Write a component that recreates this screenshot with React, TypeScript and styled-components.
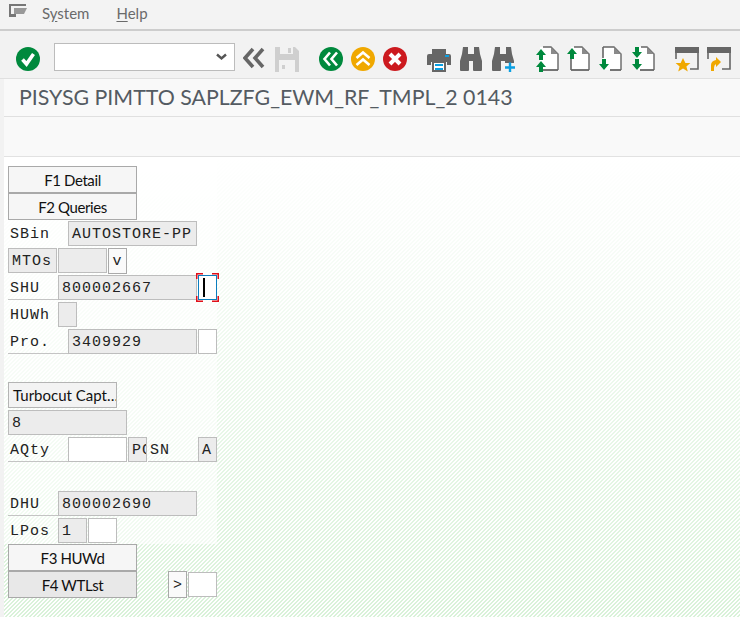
import React from "react";
import styled, { createGlobalStyle } from "styled-components";

const Global = createGlobalStyle`
  html, body { margin: 0; padding: 0; height: 100%; background: #f2f2f2; overflow: hidden; }
  #root { height: 100%; }
`;

const Screen = styled.div`
  width: 740px;
  height: 617px;
  display: flex;
  flex-direction: column;
  background: #f2f2f2;
  font-family: Lato, "Open Sans", sans-serif;
`;

const MenuBar = styled.div`
  height: 25px;
  flex: none;
  display: flex;
  align-items: center;
  background: #f3f3f3;
  border-bottom: 2px solid #cdcdcd;
  padding: 0 0 4px 9px;
  font-size: 15px;
  color: #6a6a6a;
`;

const MenuIcon = styled.svg`
  width: 18px;
  height: 14px;
  margin: -3px 15px 0 0;
`;

const MenuItem = styled.span`
  margin-right: 27px;
  u { text-underline-offset: 2px; }
`;

const ToolBar = styled.div`
  height: 48px;
  flex: none;
  display: flex;
  align-items: center;
  padding: 9px 0 0 16px;
  box-sizing: border-box;
  background: #f2f2f2;
  border-bottom: 1px solid #e0e0e0;
`;

const Group = styled.div<{ $gap?: number }>`
  display: flex;
  align-items: center;
  gap: 8px;
  margin-right: ${(p) => p.$gap ?? 20}px;
`;

const Icon = styled.svg`
  width: 24px;
  height: 26px;
  flex: none;
  display: block;
`;

const Combo = styled.div`
  width: 181px;
  height: 28px;
  margin-top: -4px;
  box-sizing: border-box;
  background: #fff;
  border: 1px solid #bcbcbc;
  display: flex;
  align-items: center;
  justify-content: flex-end;
  padding-right: 7px;
`;

const Chevron = styled.svg`
  width: 11px;
  height: 8px;
`;

const TitleBar = styled.div`
  height: 35px;
  flex: none;
  margin-left: 4px;
  padding: 0 0 2px 15px;
  display: flex;
  align-items: center;
  background: #f9f9f9;
  border-bottom: 1px solid #e0e0e0;
  font-size: 21.35px;
  color: #545b62;
  white-space: nowrap;
`;

const AppBar = styled.div`
  height: 39px;
  flex: none;
  margin-left: 4px;
  background: #f9f9f9;
  border-bottom: 1px solid #e2e2e2;
`;

const Canvas = styled.div`
  flex: 1;
  margin-left: 4px;
  background-color: #fff;
  background-image:
    linear-gradient(to bottom, #fff 0%, rgba(255, 255, 255, 0) 100%),
    linear-gradient(135deg, #d9f2d9 25%, #fff 25%, #fff 50%, #d9f2d9 50%, #d9f2d9 75%, #fff 75%);
  background-size: 100% 100%, 4px 4px;
`;

const Panel = styled.div`
  width: 213px;
  box-sizing: border-box;
  padding: 9px 0 0 4px;
  background: rgba(255, 255, 255, 0.55);
`;

const Row = styled.div`
  display: flex;
  height: 27px;
  align-items: flex-start;
`;

const FreeRows = styled.div`
  padding-left: 4px;
  width: 213px;
  box-sizing: border-box;
`;

const Button = styled.div<{ $cols: number; $focus?: boolean }>`
  width: ${(p) => p.$cols * 10 - 1}px;
  height: 27px;
  margin-right: 1px;
  flex: none;
  box-sizing: border-box;
  border: 1px solid #a9a9a9;
  background: ${(p) => (p.$focus ? "#e8e8e8" : "#f6f6f6")};
  display: flex;
  align-items: center;
  justify-content: center;
  font-size: 15px;
  letter-spacing: -0.4px;
  color: #111;
  white-space: nowrap;
`;

const Spacer = styled.div<{ $cols: number }>`
  width: ${(p) => p.$cols * 10 - 10}px;
  flex: none;
`;

const SmallButton = styled.div<{ $cols: number }>`
  width: ${(p) => p.$cols * 10 - 1}px;
  height: 26px;
  margin: 0 1px 0 0;
  flex: none;
  box-sizing: border-box;
  border: 1px solid #b4b4b4;
  background: #f3f3f3;
  display: flex;
  align-items: center;
  padding-left: 4px;
  font-size: 15px;
  color: #111;
  white-space: nowrap;
  overflow: hidden;
`;

const mono = `
  font-family: "Liberation Mono", "DejaVu Sans Mono", monospace;
  font-size: 15px;
  letter-spacing: 1px;
  color: #222;
`;

const Label = styled.div<{ $cols: number; $line?: boolean }>`
  ${mono}
  width: ${(p) => p.$cols * 10}px;
  height: 25px;
  margin-top: 1px;
  flex: none;
  box-sizing: border-box;
  padding: 2px 0 0 2px;
  display: flex;
  align-items: center;
  border-bottom: 1px solid ${(p) => (p.$line ? "#c4c4c4" : "transparent")};
`;

const Field = styled.div<{ $cols: number; $white?: boolean }>`
  ${mono}
  width: ${(p) => p.$cols * 10 - 1}px;
  height: 25px;
  margin: 1px 1px 0 0;
  flex: none;
  box-sizing: border-box;
  padding: 1px 0 0 3px;
  display: flex;
  align-items: center;
  overflow: hidden;
  white-space: nowrap;
  background: ${(p) => (p.$white ? "#fff" : "#ececec")};
  border: 1px solid #bdbdbd;
`;

const OutlineButton = styled(Field)`
  background: #fafafa;
  border-color: #a9a9a9;
  height: 26px;
  justify-content: center;
  padding-left: 0;
`;

const GtButton = styled(OutlineButton)`
  height: 27px;
  margin-top: 0;
  font-size: 15px;
  letter-spacing: 0;
`;

const CursorField = styled.div`
  position: relative;
  width: 19px;
  height: 25px;
  margin: 1px 1px 0 0;
  flex: none;
  box-sizing: border-box;
  background: #fff;
  border: 1px solid #0a7dbf;
`;

const Caret = styled.span`
  position: absolute;
  left: 4px;
  top: 2px;
  width: 2px;
  height: 19px;
  background: #000;
`;

const Corners = styled.svg`
  position: absolute;
  left: -3px;
  top: -3px;
  width: 23px;
  height: 29px;
`;

const G = "#00893d";
const Gy = "#666";
const B = "#0a9fe2";
const O = "#f0a800";

const GreenUp = ({ x, y }: { x: number; y: number }) => (
  <path d={`M${x} ${y}l5 -6 5 6h-3v5h-4v-5z`} fill={G} />
);
const GreenDown = ({ x, y }: { x: number; y: number }) => (
  <path d={`M${x} ${y}l5 6 5 -6h-3v-5h-4v5z`} fill={G} />
);

const Binoculars = ({ plus }: { plus?: boolean }) => (
  <Icon viewBox="0 0 24 26">
    <path
      d="M4 1h5v7h6V1h5l1 7 2 7v9q0 1-1 1h-7q-1 0-1-1v-9h-4v9q0 1-1 1H2q-1 0-1-1v-9l2-7z"
      fill={Gy}
    />
    {plus && <path d="M13 17h11v9H13z" fill="#f2f2f2" />}
    {plus && <path d="M14 21.5h10M19 16.5v10" stroke={B} strokeWidth="2.4" fill="none" />}
  </Icon>
);

type DocProps = { x: number; top: number; left?: string; bottom: number };

const Doc = ({ x, top, left, bottom }: DocProps) => (
  <>
    <path d={`M${x} 1H${x + 11}L${x + 18} 8V24H${x}z`} fill="#fff" />
    <path d={`M${x + top} 1H${x + 11}L${x + 18} 8V24`} fill="none" stroke={Gy} strokeWidth="1.4" />
    <path d={`M${x + 11} 1L${x + 18} 8H${x + 11}z`} fill="#8a8a8a" />
    <path d={`M${x + 18} 24H${x + bottom}`} fill="none" stroke={Gy} strokeWidth="1.8" />
    {left && <path d={left} fill="none" stroke={Gy} strokeWidth="1.6" />}
  </>
);

export default function App() {
  return (
    <Screen>
      <Global />
      <MenuBar>
        <MenuIcon viewBox="0 0 18 14">
          <path d="M0 0h17v2H2v8h5v3H0z" fill="#777" />
          <path d="M5 4h13l-3 6H5z" fill="#999" />
        </MenuIcon>
        <MenuItem>S<u>y</u>stem</MenuItem>
        <MenuItem><u>H</u>elp</MenuItem>
      </MenuBar>

      <ToolBar>
        <Group $gap={14}>
          <Icon viewBox="0 0 24 26">
            <circle cx="12" cy="13" r="12" fill={G} />
            <path d="M6.5 13.5l4 4.5 7-10" fill="none" stroke="#fff" strokeWidth="3.6" />
          </Icon>
        </Group>
        <Group $gap={8}>
          <Combo>
            <Chevron viewBox="0 0 11 8">
              <path d="M1 1.5l4.5 4 4.5-4" fill="none" stroke="#555" strokeWidth="2.4" />
            </Chevron>
          </Combo>
        </Group>
        <Group>
          <Icon viewBox="0 0 24 26">
            <path d="M10 3l-8 9 8 9M20 3l-8 9 8 9" fill="none" stroke={Gy} strokeWidth="3.6" />
          </Icon>
          <Icon viewBox="0 0 24 26">
            <path d="M0 1h20l4 4v21H0z" fill="#cfcfcf" />
            <path d="M5 1h13v7H5z" fill="#f2f2f2" />
            <path d="M13 2h3v5h-3z" fill="#cfcfcf" />
            <path d="M4 14h16v12H4z" fill="#f2f2f2" />
            <path d="M7 19h3v4H7z" fill="#cfcfcf" />
          </Icon>
        </Group>
        <Group>
          <Icon viewBox="0 0 24 26">
            <circle cx="12" cy="13" r="12" fill={G} />
            <path d="M11 6.5l-5.5 6.5 5.5 6.5M18 6.5l-5.5 6.5 5.5 6.5" fill="none" stroke="#fff" strokeWidth="2.6" />
          </Icon>
          <Icon viewBox="0 0 24 26">
            <circle cx="12" cy="13" r="12" fill={O} />
            <path d="M5.5 12l6.5-5.5 6.5 5.5M5.5 19l6.5-5.5 6.5 5.5" fill="none" stroke="#fff" strokeWidth="2.6" />
          </Icon>
          <Icon viewBox="0 0 24 26">
            <circle cx="12" cy="13" r="12" fill="#cc1a1f" />
            <path d="M7 8l10 10M17 8L7 18" fill="none" stroke="#fff" strokeWidth="4" />
          </Icon>
        </Group>
        <Group>
          <Icon viewBox="0 0 24 26">
            <path d="M5 3h14v5H5z" fill={Gy} />
            <path d="M0 10q0-2 2-2h20q2 0 2 2v9h-4v-3H4v3H0z" fill={Gy} />
            <path d="M18 9h4v2h-4z" fill={B} />
            <path d="M5 15h14v11H5z" fill={Gy} />
            <path d="M7 17h10v7H7z" fill="#fff" />
            <path d="M8 18h8v2H8zM8 22h8v2H8z" fill={B} />
          </Icon>
          <Binoculars />
          <Binoculars plus />
        </Group>
        <Group>
          <Icon viewBox="0 0 24 26">
            <Doc x={5} top={3} bottom={1} />
            <GreenUp x={1} y={9} />
            <GreenUp x={1} y={21} />
          </Icon>
          <Icon viewBox="0 0 24 26">
            <Doc x={4} top={3} bottom={0} left="M4 12V24" />
            <GreenUp x={0} y={8} />
          </Icon>
          <Icon viewBox="0 0 24 26">
            <Doc x={4} top={0} bottom={7} left="M4 1V12" />
            <GreenDown x={0} y={18} />
          </Icon>
          <Icon viewBox="0 0 24 26">
            <Doc x={5} top={5} bottom={4} />
            <GreenDown x={1} y={6} />
            <GreenDown x={1} y={18} />
          </Icon>
        </Group>
        <Group>
          <Icon viewBox="0 0 24 26">
            <path d="M0 1h24v6H0z" fill={Gy} />
            <path d="M23 7v16H15M1 7v6" fill="none" stroke={Gy} strokeWidth="1.6" />
            <path d="M8 12l2.4 5h5l-4 3.4 1.4 5-4.8-3-4.8 3 1.4-5-4-3.4h5z" fill={O} />
          </Icon>
          <Icon viewBox="0 0 24 26">
            <path d="M0 1h24v6H0z" fill={Gy} />
            <path d="M23 7v16H15M1 7v6" fill="none" stroke={Gy} strokeWidth="1.6" />
            <path d="M4 25v-6q0-4 5-5v-3l5 5-5 5v-3q-2 1-2 4v3z" fill={O} />
          </Icon>
        </Group>
      </ToolBar>

      <TitleBar>PISYSG PIMTTO SAPLZFG_EWM_RF_TMPL_2 0143</TitleBar>
      <AppBar />

      <Canvas>
        <Panel>
          <Row><Button $cols={13}>F1 Detail</Button></Row>
          <Row><Button $cols={13}>F2 Queries</Button></Row>
          <Row>
            <Label $cols={6}>SBin</Label>
            <Field $cols={13}>AUTOSTORE-PP</Field>
          </Row>
          <Row>
            <Field $cols={5}>MTOs</Field>
            <Field $cols={5} />
            <OutlineButton $cols={2}>v</OutlineButton>
          </Row>
          <Row>
            <Label $cols={5} $line>SHU</Label>
            <Field $cols={14}>800002667</Field>
            <CursorField>
              <Caret />
              <Corners viewBox="0 0 23 29">
                <path
                  d="M.75 6V.75H7M16 .75h6.25V6M.75 23v5.25H7M16 28.25h6.25V23"
                  fill="none"
                  stroke="#e0101a"
                  strokeWidth="1.5"
                />
              </Corners>
            </CursorField>
          </Row>
          <Row>
            <Label $cols={5}>HUWh</Label>
            <Field $cols={2} />
          </Row>
          <Row>
            <Label $cols={6} $line>Pro.</Label>
            <Field $cols={13}>3409929</Field>
            <Field $cols={2} $white />
          </Row>
          <Row />
          <Row><SmallButton $cols={11}>Turbocut Capt…</SmallButton></Row>
          <Row><Field $cols={12}>8</Field></Row>
          <Row>
            <Label $cols={6} $line>AQty</Label>
            <Field $cols={6} $white />
            <Field $cols={2}>PC</Field>
            <Label $cols={5} $line>SN</Label>
            <Field $cols={2}>A</Field>
          </Row>
          <Row />
          <Row>
            <Label $cols={5} $line>DHU</Label>
            <Field $cols={14}>800002690</Field>
          </Row>
          <Row>
            <Label $cols={5}>LPos</Label>
            <Field $cols={3}>1</Field>
            <Field $cols={3} $white />
          </Row>
        </Panel>
        <FreeRows>
          <Row><Button $cols={13}>F3 HUWd</Button></Row>
          <Row>
            <Button $cols={13} $focus>F4 WTLst</Button>
            <Spacer $cols={4} />
            <GtButton $cols={2}>&gt;</GtButton>
            <Field $cols={3} $white />
          </Row>
        </FreeRows>
      </Canvas>
    </Screen>
  );
}
